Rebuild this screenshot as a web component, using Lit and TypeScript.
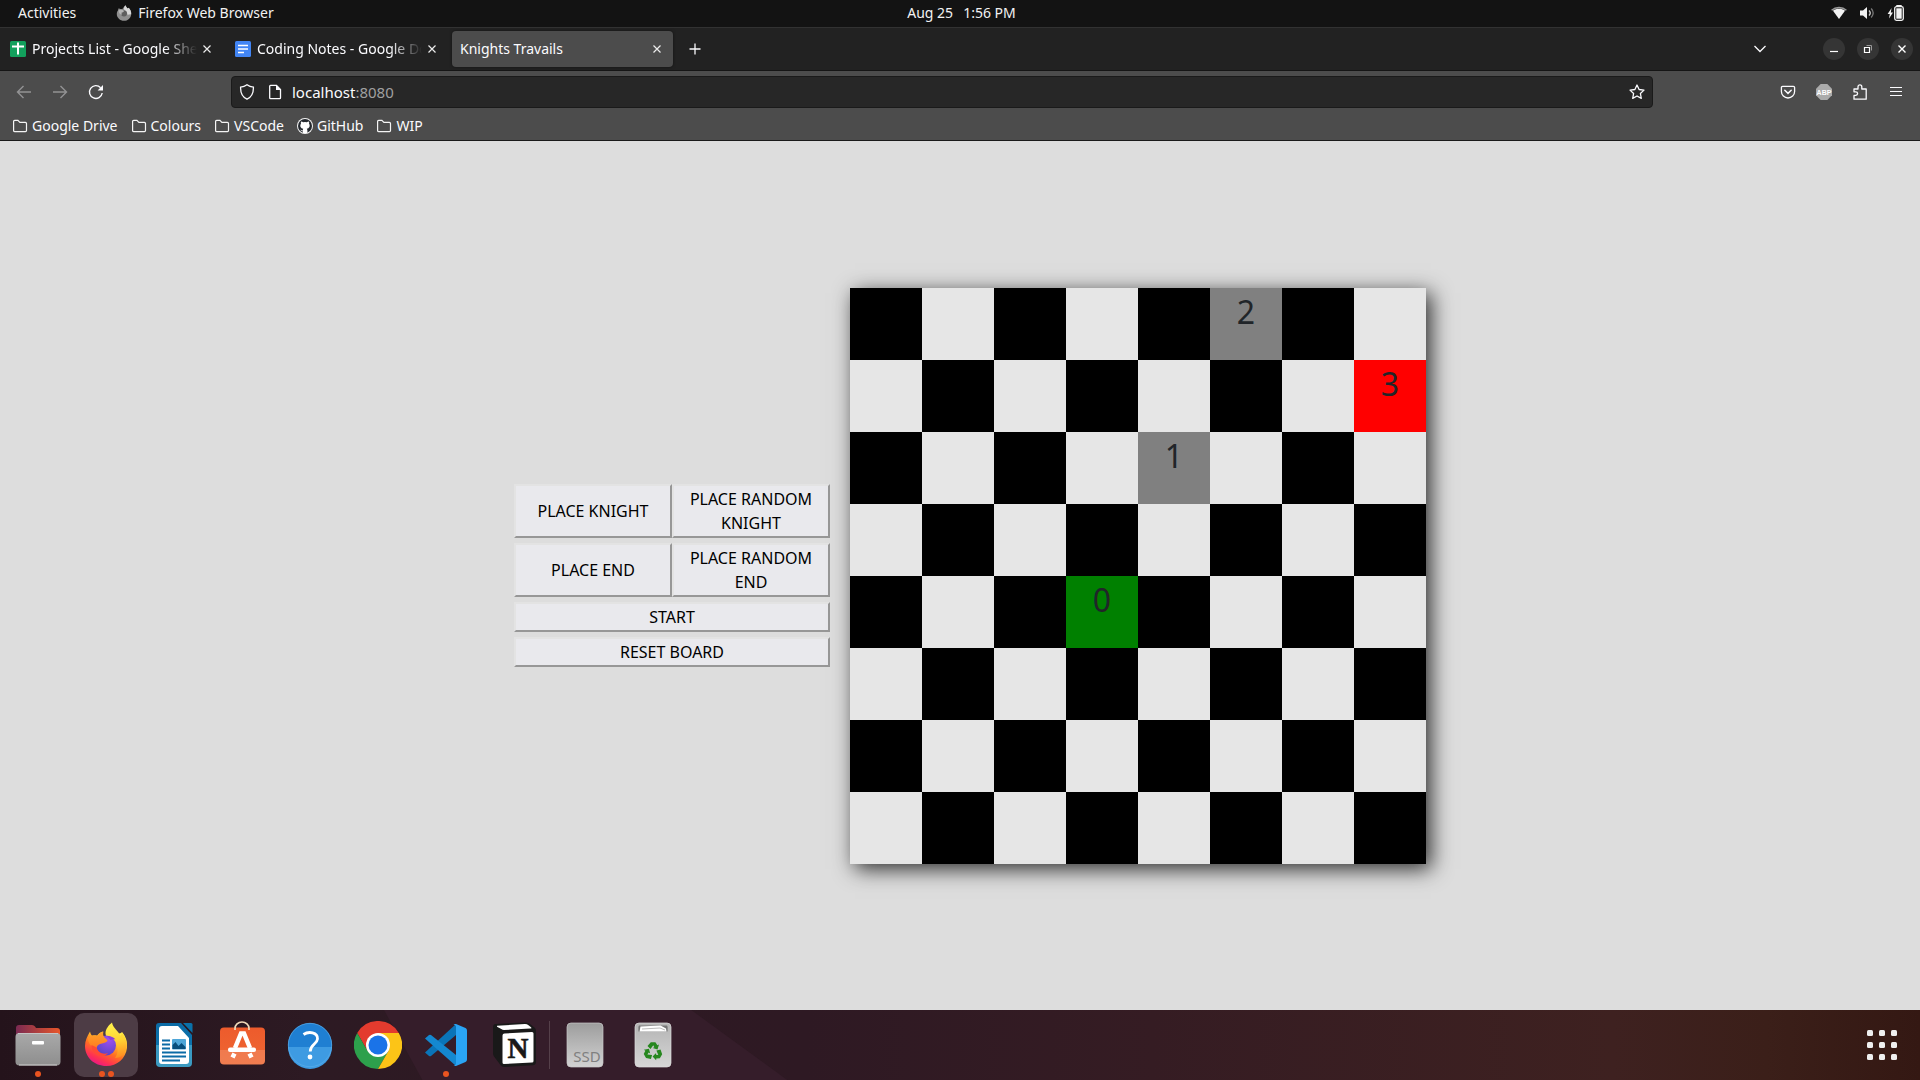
import { LitElement, html, css, svg } from "lit";
import { customElement } from "lit/decorators.js";
import { classMap } from "lit/directives/class-map.js";

const base = css`
  :host, * { box-sizing: border-box; }
  svg { display: block; flex: none; }
  button {
    margin: 0; padding: 0; border: 0; background: none; color: inherit;
    font: inherit; display: flex; align-items: center; justify-content: center;
  }
`;

@customElement("system-bar")
class SystemBar extends LitElement {
  static styles = [base, css`
    :host {
      display: grid; grid-template-columns: 1fr auto 1fr; align-items: center;
      height: 28px; padding: 0 15px 1px 18px; background: #131313; color: #f2f2f2;
      border-bottom: 1px solid #323232; font-size: 14px; line-height: 20px;
    }
    .left, .app, .clock, .status { display: flex; align-items: center; }
    .left { gap: 40px; }
    .app { gap: 6px; }
    .clock { gap: 10px; }
    .status { gap: 12px; justify-content: flex-end; }
  `];
  render() {
    return html`
      <div class="left">
        <button>Activities</button>
        <button class="app">
          <svg width="16" height="16" viewBox="0 0 16 16">
            <path d="M2.800 3.200C3.800 4 5 4 6.200 4.200 7 2.800 8.300 1.500 9.400.2c.6 1.600 1.600 2.400 2.400 3.400l.8-.8c1.600 1.600 2.800 3.800 2.600 6.400-.3 4-3.400 6.600-7.200 6.600S.8 12.800.8 9c0-2 .6-3 1.300-3.800 0-.8.2-1.400.7-2z" fill="#8f8f8f"/>
            <path d="M9.400.2c.6 1.600 1.600 2.400 2.400 3.400l.8-.8c1.600 1.600 2.800 3.800 2.600 6.400l-3.700.6C11.200 6.500 9.500 5.500 8 4.500 7.800 2.800 8.300 1.500 9.400.2z" fill="#d8d8d8"/>
            <circle cx="8" cy="8.400" r="3" fill="#5e5e5e"/>
            <path d="M2.500 5.500c2-1 4-.8 5.500.5-.4 1.200-1.600 1.300-2.600 1.700l.6 2C4 9.500 2.800 8 2.500 5.500z" fill="#b5b5b5"/>
          </svg>
          <span>Firefox Web Browser</span>
        </button>
      </div>
      <button class="clock"><span>Aug 25</span><span>1:56 PM</span></button>
      <div class="status">
        <svg width="16" height="16" viewBox="0 0 16 16">
          <path d="M.6 5.200C4.600 1.600 11.400 1.600 15.400 5.200" fill="none" stroke="#9a9a9a" stroke-width="1.400"/>
          <path d="M2 5.800C5.500 3.200 10.500 3.200 14 5.800L8 14z" fill="#f2f2f2"/>
        </svg>
        <svg width="16" height="16" viewBox="0 0 16 16">
          <path d="M1 5.500h3L8 2v12L4 10.500H1z" fill="#f2f2f2"/>
          <path d="M10 5.500c1.500 1.500 1.500 3.500 0 5" fill="none" stroke="#d0d0d0" stroke-width="1.300"/>
          <path d="M12.200 3.500c2.400 2.700 2.400 6.300 0 9" fill="none" stroke="#777" stroke-width="1.300"/>
        </svg>
        <svg width="18" height="16" viewBox="0 0 18 16">
          <path d="M4.600 3L.6 9h2.200L2 13.500 6 7.500H3.800z" fill="#f2f2f2"/>
          <path d="M10 1.500V.7h4v.8" fill="none" stroke="#f2f2f2" stroke-width="1.400"/>
          <rect x="7.700" y="1.700" width="8.600" height="13.600" rx="1.800" fill="none" stroke="#f2f2f2" stroke-width="1.300"/>
          <rect x="9.300" y="3.300" width="5.400" height="10.400" fill="#f2f2f2"/>
        </svg>
      </div>`;
  }
}

const closeIcon = svg`<path d="M2.500 2.500l7 7M9.500 2.500l-7 7" stroke="#ececec" stroke-width="1.200" fill="none"/>`;
const folder = html`<svg width="16" height="16" viewBox="0 0 16 16">
  <path d="M1.600 12.600V3.400q0-1 1-1h3.300l2 2h5.500q1.100 0 1.100 1v7.200q0 1-1 1H2.600q-1 0-1-1z" fill="none" stroke="#f4f4f4" stroke-width="1.200"/></svg>`;
const github = html`<svg width="16" height="16" viewBox="0 0 16 16">
  <circle cx="8" cy="8" r="8" fill="#f4f4f4"/><circle cx="8" cy="8" r="7" fill="#24292f"/>
  <path d="M4 3.400q1.400 0 2.200.9 1.800-.4 3.600 0 .8-.9 2.200-.9.400 1.200 0 2.200c1.600 2.600.3 4.900-2.200 5.200q.6.600.6 1.600V15H5.800v-1.800c-1.700.3-2-.7-2.800-1.600 1 0 1.400 1.200 2.800.8q0-1 .4-1.600C3.700 10.500 2.400 8.200 4 5.600q-.4-1 0-2.200z" fill="#fff"/></svg>`;

@customElement("browser-chrome")
class BrowserChrome extends LitElement {
  static styles = [base, css`
    :host { display: block; color: #fbfbfe; font-size: 14px; line-height: 20px; }
    .tabs { display: flex; align-items: center; height: 43px; padding: 0 7px 0 0; background: #222; border-bottom: 1px solid #151515; }
    .tab { display: flex; align-items: center; width: 221px; height: 36px; margin: 0 2px; padding: 0 8px; gap: 6px; border-radius: 4px; }
    .tab.active { background: #4c4c4c; box-shadow: 0 0 3px rgba(0, 0, 0, 0.5); }
    .title { flex: 1; min-width: 0; overflow: hidden; white-space: nowrap; }
    .title.fade { margin-right: -4px; mask-image: linear-gradient(to left, transparent, #000 32px); }
    .close { width: 16px; height: 16px; }
    .new { width: 36px; height: 36px; margin-left: 2px; }
    .list { margin-left: auto; width: 36px; height: 36px; margin-right: 45px; }
    .windows { display: flex; gap: 12px; }
    .windows button { width: 22px; height: 22px; border-radius: 50%; background: #353535; }
    .toolbar { display: flex; align-items: center; height: 41px; padding: 0 16px 0 16px; background: #4c4c4c; }
    .nav { display: flex; gap: 20px; width: 215px; }
    .dim { opacity: 0.4; }
    .address { display: flex; align-items: center; flex: 1; height: 32px; padding: 0 7px; gap: 12px; border: 1px solid #1a1a1a; border-radius: 4px; background: #272727; }
    .site { display: flex; align-items: center; flex: 1; gap: 9px; }
    .url { flex: 1; position: relative; display: flex; font-size: 15px; }
    .url input { flex: 1; min-width: 0; padding: 0; border: 0; background: none; color: transparent; font: inherit; outline: none; }
    .shown { position: absolute; inset: 0; pointer-events: none; white-space: pre; }
    .port { color: #a0a0a0; }
    .tools { display: flex; justify-content: flex-end; gap: 20px; width: 251px; }
    .bookmarks { display: flex; align-items: center; height: 29px; padding: 0 12px 1px; gap: 13px; background: #4c4c4c; border-bottom: 1px solid #1a1a1a; }
    .bookmarks a { display: flex; align-items: center; gap: 4px; color: inherit; text-decoration: none; }
    .abp { font-weight: 700; font-size: 7px; font-family: "Liberation Sans", sans-serif; }
  `];
  render() {
    return html`
      <div class="tabs">
        <div class="tab">
          <svg width="16" height="16" viewBox="0 0 16 16"><rect width="16" height="16" rx="1.500" fill="#12a05c"/><path d="M2 5.500h12M8 1.500v12" stroke="#fff" stroke-width="2"/></svg>
          <span class="title fade">Projects List - Google Sheets</span>
          <button class="close" aria-label="Close tab"><svg width="12" height="12" viewBox="0 0 12 12">${closeIcon}</svg></button>
        </div>
        <div class="tab">
          <svg width="16" height="16" viewBox="0 0 16 16"><rect width="16" height="16" rx="1.500" fill="#4285f4"/><path d="M3 4.500h10M3 8h10M3 11.500h6" stroke="#fff" stroke-width="1.700"/></svg>
          <span class="title fade">Coding Notes - Google Docs</span>
          <button class="close" aria-label="Close tab"><svg width="12" height="12" viewBox="0 0 12 12">${closeIcon}</svg></button>
        </div>
        <div class="tab active">
          <span class="title">Knights Travails</span>
          <button class="close" aria-label="Close tab"><svg width="12" height="12" viewBox="0 0 12 12">${closeIcon}</svg></button>
        </div>
        <button class="new" aria-label="New tab"><svg width="12" height="12" viewBox="0 0 12 12"><path d="M6 .5v11M.5 6h11" stroke="#fbfbfe" stroke-width="1.300"/></svg></button>
        <button class="list" aria-label="List all tabs"><svg width="14" height="14" viewBox="0 0 14 14"><path d="M1.500 4L7 9.500 12.500 4" fill="none" stroke="#fbfbfe" stroke-width="1.300"/></svg></button>
        <div class="windows">
          <button aria-label="Minimize"><svg width="10" height="10" viewBox="0 0 10 10"><path d="M1 7.500h8" stroke="#fff" stroke-width="1.200"/></svg></button>
          <button aria-label="Restore"><svg width="10" height="10" viewBox="0 0 10 10"><path d="M3.500 1.500h5v5" fill="none" stroke="#999"/><path d="M1.500 3.500h5v5h-5z" fill="none" stroke="#fff" stroke-width="1.200"/></svg></button>
          <button aria-label="Close"><svg width="10" height="10" viewBox="0 0 10 10"><path d="M1.500 1.500l7 7M8.500 1.500l-7 7" stroke="#fff" stroke-width="1.400"/></svg></button>
        </div>
      </div>
      <div class="toolbar">
        <div class="nav">
          <button class="dim" aria-label="Back"><svg width="16" height="16" viewBox="0 0 16 16"><path d="M15 8H1.500M7.500 2l-6 6 6 6" fill="none" stroke="#fbfbfe" stroke-width="1.400"/></svg></button>
          <button class="dim" aria-label="Forward"><svg width="16" height="16" viewBox="0 0 16 16"><path d="M1 8h13.500M8.500 2l6 6-6 6" fill="none" stroke="#fbfbfe" stroke-width="1.400"/></svg></button>
          <button aria-label="Reload"><svg width="16" height="16" viewBox="0 0 16 16"><path d="M14.200 9A6.400 6.400 0 1 1 12.600 3.700" fill="none" stroke="#fbfbfe" stroke-width="1.400"/><path d="M15 1v5.400H9.600z" fill="#fbfbfe"/></svg></button>
        </div>
        <div class="address">
          <svg width="16" height="16" viewBox="0 0 16 16"><path d="M8 .8c2 1.500 4 2.200 6.400 2.400.2 5.400-1.200 9.600-6.400 12C2.800 12.800 1.400 8.600 1.600 3.200 4 3 6 2.300 8 .8z" fill="none" stroke="#fbfbfe" stroke-width="1.300"/></svg>
          <div class="site">
            <svg width="16" height="16" viewBox="0 0 16 16"><path d="M2.700 2.200q0-.8.800-.8H9.500l4 4v8.300q0 .9-.9.900H3.600q-.9 0-.9-.9z" fill="none" stroke="#fbfbfe" stroke-width="1.300"/><path d="M9 1v5h5z" fill="#fbfbfe"/></svg>
            <div class="url">
              <input aria-label="Address" .value=${"localhost:8080"} />
              <span class="shown" aria-hidden="true">localhost<span class="port">:8080</span></span>
            </div>
          </div>
          <button aria-label="Bookmark this page"><svg width="16" height="16" viewBox="0 0 16 16"><path d="M8 1l2.100 4.500 4.900.6-3.600 3.400.9 4.900L8 12l-4.300 2.400.9-4.900L1 6.100l4.900-.6z" fill="none" stroke="#fbfbfe" stroke-width="1.300" stroke-linejoin="round"/></svg></button>
        </div>
        <div class="tools">
          <button aria-label="Save to Pocket"><svg width="16" height="16" viewBox="0 0 16 16"><path d="M2.600 2.300h10.800q1.200 0 1.200 1.200v3.900a6.600 6.600 0 0 1-13.200 0V3.500q0-1.200 1.200-1.200z" fill="none" stroke="#fbfbfe" stroke-width="1.300"/><path d="M4.800 6.300L8 9.400l3.200-3.100" fill="none" stroke="#fbfbfe" stroke-width="1.500" stroke-linecap="round"/></svg></button>
          <button aria-label="Adblock Plus"><svg width="16" height="16" viewBox="0 0 16 16"><path d="M4.700 0h6.600L16 4.700v6.600L11.300 16H4.700L0 11.300V4.700z" fill="#ababab"/><text class="abp" x="8" y="10.600" text-anchor="middle" fill="#fff">ABP</text></svg></button>
          <button aria-label="Extensions"><svg width="16" height="16" viewBox="0 0 16 16"><path d="M2 15.200V11.400h1.800a1.800 1.800 0 0 0 0-3.600H2V5h4V2.800a1.900 1.900 0 0 1 3.800 0V5h4.400v10.200z" fill="none" stroke="#fbfbfe" stroke-width="1.300" stroke-linejoin="round"/></svg></button>
          <button aria-label="Menu"><svg width="16" height="16" viewBox="0 0 16 16"><path d="M2 3.500h12M2 7.500h12M2 11.500h12" stroke="#fbfbfe" stroke-width="1.200"/></svg></button>
        </div>
      </div>
      <nav class="bookmarks">
        <a href="#drive">${folder}Google Drive</a>
        <a href="#colours">${folder}Colours</a>
        <a href="#vscode">${folder}VSCode</a>
        <a href="#github">${github}GitHub</a>
        <a href="#wip">${folder}WIP</a>
      </nav>`;
  }
}

const path: Record<string, number> = { "4,3": 0, "2,4": 1, "0,5": 2, "1,7": 3 };

@customElement("knight-board")
class KnightBoard extends LitElement {
  static styles = [base, css`
    :host { display: flex; align-items: center; justify-content: center; background: #ddd; font-size: 16px; line-height: 24px; }
    .controls { display: grid; grid-template-columns: 158px 158px; row-gap: 5px; margin: 0 20px; }
    .controls button { padding: 1px 6px; border: 2px solid; border-color: #e3e3e3 #979797 #979797 #e3e3e3; background: #e9e9ed; color: #000; }
    .wide { grid-column: span 2; }
    .board { display: grid; grid-template-columns: repeat(8, 72px); grid-auto-rows: 72px; box-shadow: 5px 5px 20px rgba(0, 0, 0, 0.8); }
    .cell { background: #e6e6e6; color: #212529; font-size: 32px; line-height: 48px; text-align: center; }
    .dark { background: #000; }
    .step { background: #808080; }
    .start { background: #008000; }
    .end { background: #f00; }
  `];
  render() {
    const cells = Array.from({ length: 64 }, (_, i) => {
      const row = Math.floor(i / 8), col = i % 8, n = path[`${row},${col}`];
      const cls = { cell: true, dark: (row + col) % 2 === 0, step: n === 1 || n === 2, start: n === 0, end: n === 3 };
      return html`<div class=${classMap(cls)}>${n ?? ""}</div>`;
    });
    return html`
      <div class="controls">
        <button>PLACE KNIGHT</button><button>PLACE RANDOM KNIGHT</button>
        <button>PLACE END</button><button>PLACE RANDOM END</button>
        <button class="wide">START</button>
        <button class="wide">RESET BOARD</button>
      </div>
      <div class="board">${cells}</div>`;
  }
}

const icons = {
  files: html`<svg width="48" height="48" viewBox="0 0 48 48">
    <defs><linearGradient id="files-back"><stop stop-color="#7a2a52"/><stop offset="1" stop-color="#e8562a"/></linearGradient>
    <linearGradient id="files-front" x2="0" y2="1"><stop stop-color="#a9a9a9"/><stop offset="1" stop-color="#8e8e8e"/></linearGradient></defs>
    <path d="M2 12V7q0-3 3-3h13q2 0 3 1.500l1 1.500h21q3 0 3 3v10H2z" fill="url(#files-back)"/>
    <rect x="1.500" y="12" width="45" height="32.500" rx="4" fill="url(#files-front)"/>
    <path d="M4 12.500h40" stroke="#c4c4c4"/><path d="M5 44h38" stroke="#d0d0d0"/>
    <rect x="18" y="20" width="12" height="3.500" rx="1" fill="#fff"/></svg>`,
  firefox: html`<svg width="48" height="48" viewBox="0 0 48 48">
    <defs><linearGradient id="fox-body" x1=".85" y1=".1" x2=".3" y2="1"><stop stop-color="#fff04a"/><stop offset=".3" stop-color="#ffb52a"/><stop offset=".55" stop-color="#ff7022"/><stop offset=".8" stop-color="#ff3350"/><stop offset="1" stop-color="#e9158a"/></linearGradient>
    <linearGradient id="fox-flame" x1=".5" y1="0" x2=".6" y2="1"><stop stop-color="#fff24c"/><stop offset=".5" stop-color="#ffd433"/><stop offset="1" stop-color="#ff8a20"/></linearGradient>
    <linearGradient id="fox-head" x2="0" y2="1"><stop stop-color="#ffa62a"/><stop offset="1" stop-color="#ff7a22"/></linearGradient>
    <radialGradient id="fox-globe" cx=".65" cy=".2" r=".85"><stop stop-color="#a04ff0"/><stop offset="1" stop-color="#5544c4"/></radialGradient></defs>
    <path d="M8 10.500c.5 2 1 3 2 4 1.500-.3 3.500-.3 5 .2 2-2.700 4-3.700 6-4.200-.8 2.500-.5 4.500 1 6L39 12l1-1c4 5 5.500 9 5 15.500C44 37.500 35 45 24.500 45 12 45 3 36 3 25c0-5 2-9.500 5-14.500z" fill="url(#fox-body)"/>
    <path d="M30 1.500c1 5.500 6 8 8.500 13.500L40 11.500c3.500 5 5.500 10 4.500 16C42.500 34 38 37 33 37c3.500-5 3.500-10 .5-14C30 18.500 24 18.500 23.500 12.500 23.500 8 26.500 4.500 30 1.500z" fill="url(#fox-flame)"/>
    <circle cx="24" cy="24.500" r="10" fill="url(#fox-globe)"/>
    <path d="M25 15c4 0 7 1.500 8.500 3.500-2-.5-3.500 0-5 .5z" fill="#8a3fd8"/>
    <path d="M6 17c2-2 6-3 9.500-2.300 2-2.700 4-3.700 6-4.200-.8 2.500-.5 4.500 1.500 6.500 1.500 1.200 2.500 2 2.500 3-2 2-5 2-7.500 3-2 .8-3 2-3.500 4C9 26.500 6 22 6 17z" fill="url(#fox-head)"/>
    <path d="M14.500 26.500C16 31.500 21 34 26 32c-2 3-6 4-10 2.500C11 32.500 9.500 28 9.500 24z" fill="#ff4a35"/></svg>`,
  writer: html`<svg width="48" height="48" viewBox="0 0 48 48">
    <defs><linearGradient id="writer-frame" x2="0" y2="1"><stop stop-color="#0b6ba6"/><stop offset=".5" stop-color="#0c72ac"/><stop offset=".5" stop-color="#3899c4"/><stop offset="1" stop-color="#3c9ac0"/></linearGradient></defs>
    <path d="M9 2h22l11 12v28q0 4-4 4H10q-4 0-4-4V5q0-3 3-3z" fill="url(#writer-frame)"/>
    <path d="M33 2h8q1.500 0 1.500 1.500V12z" fill="#0a71a9"/>
    <path d="M12 5h16l11 12v23q0 3-3 3H12q-3 0-3-3V8q0-3 3-3z" fill="#fff"/>
    <path d="M12 19.500h8M12 23.500h8M12 27.500h8M12 31.500h24M12 35.500h24M12 39.500h18" stroke="#0b6ba6" stroke-width="1.800"/>
    <rect x="22" y="18" width="14" height="10.500" rx="1" fill="#4ea6d8"/><path d="M22.500 28v-4l3-3 3 4 3-3 4 4v2z" fill="#084e7c"/></svg>`,
  software: html`<svg width="48" height="48" viewBox="0 0 48 48">
    <defs><linearGradient id="bag" x2="0" y2="1"><stop stop-color="#ed5b2c"/><stop offset=".6" stop-color="#ee6230"/><stop offset=".6" stop-color="#f07a4e"/><stop offset="1" stop-color="#f07d50"/></linearGradient></defs>
    <rect x="2" y="6.500" width="45" height="37" rx="4" fill="url(#bag)"/>
    <path d="M17 9V7.500a7 6.500 0 0 1 14 0V9" fill="none" stroke="#efd9b9" stroke-width="1.700"/>
    <path d="M17 27l6-14.500h3L32 27M14.500 36.500l2-4M33.500 36.500l-2-4" fill="none" stroke="#fff" stroke-width="4.500"/>
    <rect x="10" y="26.500" width="28" height="4.500" rx="2" fill="#fff"/></svg>`,
  help: html`<svg width="48" height="48" viewBox="0 0 48 48">
    <circle cx="24" cy="24" r="22" fill="#1f7fd2"/><path d="M2 26h44a22 22 0 0 1-44 0z" fill="#3e9be2"/><circle cx="24" cy="24" r="21.700" fill="none" stroke="#5aaee9" stroke-width=".7"/>
    <path d="M17.500 13.500c5-3.500 14.500-2.500 14 4.500-.3 5-7.300 5.500-7.300 12.500" fill="none" stroke="#fff" stroke-width="2.800"/><circle cx="24" cy="36" r="2.400" fill="#fff"/></svg>`,
  chrome: html`<svg width="48" height="48" viewBox="0 0 48 48">
    <path d="M24 12h20.800A24 24 0 0 0 3.200 12l10.400 18z" fill="#e33b2e"/>
    <path d="M13.600 30L3.200 12A24 24 0 0 0 24 48l10.400-18z" fill="#2da04c"/>
    <path d="M34.400 30L24 48a24 24 0 0 0 20.800-36H24z" fill="#fcc417"/>
    <circle cx="24" cy="24" r="12" fill="#fff"/><circle cx="24" cy="24" r="9.500" fill="#1a73e8"/></svg>`,
  code: html`<svg width="48" height="48" viewBox="0 0 48 48">
    <path d="M3 31.500l4 3.500q1 .6 2 0L34 14V3z" fill="#0a74b8"/>
    <path d="M3 17.500l4-3.500q1-.6 2 0L34 34v11z" fill="#1488d0"/>
    <path d="M34 3l9.500 4q1.500.8 1.500 2.500v29q0 1.700-1.500 2.500L34 45q-1.500.3-2.500-1 2.500 1 2.500-1.500v-37Q34 3.500 31.500 4q1-1.300 2.500-1z" fill="#2aa4f4"/></svg>`,
  notion: html`<svg width="48" height="48" viewBox="0 0 48 48">
    <path d="M5 3l31-1.500q2 0 4 1.500l5 4q1 1 1 3v31q0 3-3 3.200L14 46q-2 0-3.500-2L4 35.500Q3 34 3 32V6q0-2.500 2-3z" fill="#191919"/>
    <path d="M7 4.700l28-1.700q2 0 3.500 1.200l2.500 2q1.200 1.200-.8 1.300L14 9q-1.500 0-2.700-1L7 5.800z" fill="#fff"/>
    <path d="M14.500 12.500L42 11q1.500 0 1.500 1.500V40q0 1.500-1.500 1.600L14 43q-1.500 0-1.500-1.500V14.500q0-1.900 2-2z" fill="#fff"/>
    <text x="28" y="37" text-anchor="middle" font-family="Liberation Serif, serif" font-weight="700" font-size="29" fill="#191919" stroke="#191919" stroke-width=".6">N</text></svg>`,
  ssd: html`<svg width="48" height="48" viewBox="0 0 48 48">
    <defs><linearGradient id="drive" x2="0" y2="1"><stop stop-color="#9d9d9d"/><stop offset="1" stop-color="#d2d2d2"/></linearGradient></defs>
    <rect x="6" y="2" width="36" height="44" rx="4" fill="url(#drive)" stroke="#c8c8c8" stroke-width=".7"/>
    <text x="26" y="40.500" text-anchor="middle" font-family="Noto Sans, sans-serif" font-size="15" fill="#808080">SSD</text></svg>`,
  trash: html`<svg width="48" height="48" viewBox="0 0 48 48">
    <defs><linearGradient id="bin" x2="0" y2="1"><stop stop-color="#b4b4b4"/><stop offset="1" stop-color="#d6d6d6"/></linearGradient></defs>
    <rect x="6" y="2" width="36" height="44" rx="4" fill="url(#bin)" stroke="#dcdcdc" stroke-width=".7"/>
    <path d="M10 4.500h28q1 1 .5 6H9.500q-.5-5 .5-6z" fill="#777"/><path d="M11.500 5.500l20-1 5.500 3 .5 3h-27z" fill="#fff"/><path d="M13 8l18-1 5 2" fill="none" stroke="#aaa" stroke-width=".8"/>
    <g fill="#27871f"><path d="M18.500 25l3.300-3.800h4.600l2 3 1.600-.8-1.500 5-4.800-1.300 1.600-.9-1-2-2.800 3.800z"/>
    <path d="M18.500 25l3.300-3.800h4.600l2 3 1.600-.8-1.500 5-4.800-1.300 1.600-.9-1-2-2.800 3.800z" transform="rotate(120 24 30.500)"/>
    <path d="M18.500 25l3.300-3.800h4.600l2 3 1.600-.8-1.500 5-4.800-1.300 1.600-.9-1-2-2.800 3.800z" transform="rotate(240 24 30.500)"/></g></svg>`,
};

@customElement("app-dock")
class AppDock extends LitElement {
  static styles = [base, css`
    :host {
      display: flex; align-items: center; height: 70px; padding: 0 17px 0 6px; gap: 4px;
      position: relative; isolation: isolate;
      background: linear-gradient(to right, #24131b, #2d1a23 16%, #2e1923 42%, #351c23 60%, #3e2120 84%, #3b1f19 92%, #341813);
    }
    :host::before {
      content: ""; position: absolute; inset: 0; z-index: -1; background: #351d2a;
      clip-path: polygon(20% 0, 36% 0, 41% 100%, 22% 100%);
    }
    .item { display: grid; place-items: center; width: 64px; height: 64px; border-radius: 10px; position: relative; }
    .item.active { background: #4d3c45; }
    .dots { position: absolute; bottom: 0; left: 0; right: 0; display: flex; justify-content: center; gap: 3px; }
    .dots i { width: 6px; height: 6px; border-radius: 50%; background: #e95420; }
    .sep { width: 1px; height: 48px; margin: 0 -1px; background: #55404a; }
    .grid { margin-left: auto; width: 42px; height: 42px; }
  `];
  item(label: string, icon: unknown, dots = 0, active = false) {
    return html`<button class=${classMap({ item: true, active })} aria-label=${label}>${icon}
      <span class="dots">${Array.from({ length: dots }, () => html`<i></i>`)}</span></button>`;
  }
  render() {
    return html`
      ${this.item("Files", icons.files, 1)}
      ${this.item("Firefox", icons.firefox, 2, true)}
      ${this.item("Writer", icons.writer)}
      ${this.item("Software", icons.software)}
      ${this.item("Help", icons.help)}
      ${this.item("Chrome", icons.chrome)}
      ${this.item("Code", icons.code, 1)}
      ${this.item("Notion", icons.notion)}
      <span class="sep"></span>
      ${this.item("SSD", icons.ssd)}
      ${this.item("Trash", icons.trash)}
      <button class="grid" aria-label="Show applications"><svg width="30" height="30" viewBox="0 0 30 30" fill="#efefef">
        ${[0, 12, 24].map((y) => [0, 12, 24].map((x) => svg`<rect x=${x} y=${y} width="6" height="6" rx="1.500"/>`))}
      </svg></button>`;
  }
}

@customElement("app-root")
class AppRoot extends LitElement {
  static styles = css`
    :host { display: flex; flex-direction: column; min-height: 100vh; font-family: "Noto Sans", sans-serif; }
    knight-board { flex: 1; }
  `;
  render() {
    return html`<system-bar></system-bar><browser-chrome></browser-chrome><knight-board></knight-board><app-dock></app-dock>`;
  }
}
